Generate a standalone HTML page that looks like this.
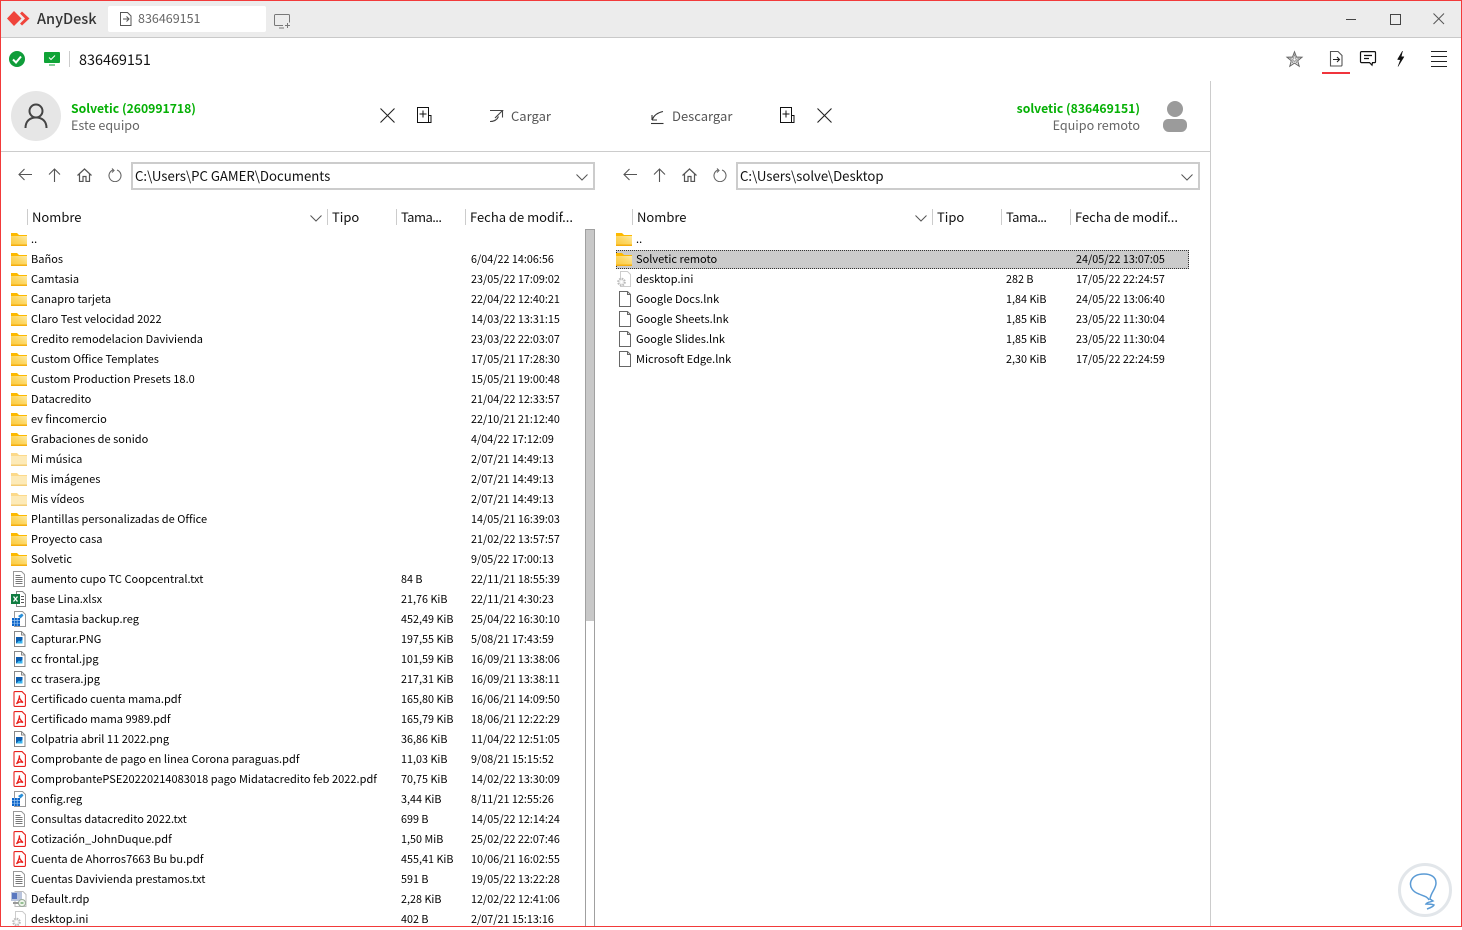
<!DOCTYPE html>
<html><head><meta charset="utf-8"><style>
html,body{margin:0;padding:0;background:#fff}
body{width:1462px;height:927px;overflow:hidden;position:relative;font-family:"Noto Sans CJK JP","Liberation Sans",sans-serif;color:#000}
div,span{position:absolute;white-space:nowrap}
svg{position:absolute;overflow:visible}
.r{left:0;width:600px;height:20px;font-size:11px;line-height:20px;letter-spacing:.03px}
.r span{top:0}
.r .s,.r .d{top:1px}
.n{left:31px}.s{left:401px;font-size:10.750px}.d{left:471px;font-size:10.750px}
.q{left:605px;width:600px}
.q .n{left:31px}.q .s{left:401px}.q .d{left:471px}
.r svg{left:10px;top:2px;width:18px;height:16px}
.h{font-size:13px;line-height:20px;top:207px;color:#111}
.sep{width:1px;height:16px;top:209px;background:#ccc}
.box{height:24px;top:162px;border:2px solid #ccc;background:#fff;font-size:13.200px;line-height:23px;color:#111}
</style></head><body>
<svg width="0" height="0" style="position:absolute"><defs>
<linearGradient id="fg" x1="0" y1="1" x2="1" y2="0"><stop offset="0" stop-color="#fbc93a"/><stop offset=".55" stop-color="#fcd868"/><stop offset="1" stop-color="#fdeaa8"/></linearGradient>
<symbol id="f" viewBox="0 0 18 16"><path d="M1 2h6l2 2h8v2H1z" fill="#fdb900"/><path d="M1 5h16v9.500H1z" fill="url(#fg)"/><path d="M1 13.500h16v1.500H1z" fill="#f5ae10"/></symbol>
<symbol id="l" viewBox="0 0 18 16"><path d="M1 2h6l2 2h8v2H1z" fill="#fcd98a"/><path d="M1 5h16v9.500H1z" fill="#fdeab8"/><path d="M1 13.500h16v1.500H1z" fill="#f4cd78"/></symbol>
<symbol id="t" viewBox="0 0 18 16"><path d="M3.500.5h8l3 3v12h-11z" fill="#fff" stroke="#999"/><path d="M5.500 4.500h5M5.500 6.500h7M5.500 8.500h7M5.500 10.500h7M5.500 12.500h7" stroke="#777"/></symbol>
<symbol id="x" viewBox="0 0 18 16"><path d="M6.500.5h6l3 3v12h-9z" fill="#fff" stroke="#888"/><path d="M11 5.500h3M11 8.500h3M11 11.500h3" stroke="#555"/><rect x="1" y="3" width="9" height="10" fill="#107c41"/><path d="M3.500 5.500l4 5M7.500 5.500l-4 5" stroke="#fff" stroke-width="1.300"/></symbol>
<symbol id="g" viewBox="0 0 18 16"><path d="M4.500.5h8l3 3v12h-11z" fill="#fff" stroke="#999"/><path d="M8 5l4-2.500 1.500 2-3 3z" fill="#2a8fd8"/><rect x="2" y="7" width="8" height="8" fill="#0a63c9"/><path d="M4.500 7v8M7.200 7v8M2 9.500h8M2 12.200h8" stroke="#9cc8f2" stroke-width=".7"/></symbol>
<symbol id="m" viewBox="0 0 18 16"><path d="M4.500.5h7l3.500 3.500v11.500H4.500z" fill="#fff" stroke="#888"/><path d="M11.500.5v3.500h3.500" fill="none" stroke="#888"/><rect x="6" y="6" width="6.500" height="6.500" fill="#0b5cad"/><path d="M6 12.500l3-3 1.500 1 2-2v4z" fill="#39b4ee"/></symbol>
<symbol id="p" viewBox="0 0 18 16"><path d="M5 .6h7l3.400 3.400v10.400a1 1 0 0 1-1 1H5a1 1 0 0 1-1-1V1.600a1 1 0 0 1 1-1z" fill="#fff" stroke="#e8201c" stroke-width="1.100"/><path d="M9.500 4.500c-.8 2 .2 4 3.500 7-2.500-1-5-.5-6.500 1.500 1.500-2.500 3-5 3-8.500z" fill="none" stroke="#e8201c" stroke-width="1.300"/></symbol>
<symbol id="d" viewBox="0 0 18 16"><path d="M5 .5h8l3 3v12H5z" fill="#fff" stroke="#bbb"/><rect x="1" y="1" width="11" height="9" fill="#b9c4dc"/><rect x="2" y="2" width="5" height="6" fill="#5a78c0"/><path d="M3 12h6" stroke="#999" stroke-width="2"/><circle cx="12" cy="12" r="3.500" fill="#eef4ea" stroke="#9a9"/><path d="M10.500 12h3" stroke="#3a8a3a"/></symbol>
<symbol id="o" viewBox="0 0 18 16"><path d="M5.500.5h7l3 3v12h-10z" fill="#fff" stroke="#ccc"/><circle cx="6.500" cy="11" r="3.300" fill="#eee" stroke="#bbb" stroke-width="2" stroke-dasharray="1.600 1"/><circle cx="6.500" cy="11" r="1.200" fill="#fff"/></symbol>
<symbol id="k" viewBox="0 0 18 16"><path d="M4.500.5h8l3 3v12h-11z" fill="#fff" stroke="#666"/><path d="M12.500.5v3h3" fill="none" stroke="#666"/></symbol>
<symbol id="nw" viewBox="0 0 15 16"><path d="M.5.500h11v15H.5z" fill="none" stroke="#111"/><path d="M11.500 8.500h2.500v7h-2.500z" fill="none" stroke="#111"/><path d="M2.500 7h7M6 3.500v7" fill="none" stroke="#111"/></symbol>
<symbol id="bk" viewBox="0 0 14 13"><path d="M14 6.500H1M6.500 1L1 6.500 6.500 12" fill="none" stroke="#555" stroke-width="1.100"/></symbol>
<symbol id="up" viewBox="0 0 13 14"><path d="M6.500 14V1M1 6.500L6.500 1 12 6.500" fill="none" stroke="#555" stroke-width="1.100"/></symbol>
<symbol id="hm" viewBox="0 0 15 14"><path d="M.5 7.500L7.500 1l7 6.500M2.500 6v7.500h3.500V8.500h3v5h3.500V6" fill="none" stroke="#555" stroke-width="1.200"/></symbol>
<symbol id="rf" viewBox="0 0 14 14"><path d="M9 2a6 6 0 1 1-4 0M4 .5L6 2.500 4 4.500" fill="none" stroke="#666" stroke-width="1.100"/></symbol>
</defs></svg>

<!-- title bar -->
<div style="left:0;top:0;width:1462px;height:37px;background:#ececec"></div>
<div style="left:0;top:37px;width:1462px;height:1px;background:#c9c9c9"></div>
<svg style="left:7px;top:10px" width="26" height="18"><path d="M7 1l7.500 7.500L7 16 0 8.500z" fill="#ef443b"/><path d="M15 1.500l7.500 7-7.500 7-2-2 5-5-5-5z" fill="#ef443b"/></svg>
<div style="left:37px;top:7px;font-size:14.500px;line-height:24px;color:#333;font-weight:500">AnyDesk</div>
<div style="left:108px;top:6px;width:158px;height:26px;background:#fff;border-radius:2px"></div>
<svg style="left:120px;top:12px" width="12" height="14" fill="none" stroke="#555"><path d="M.5.500h7l3.500 3.500v9.500H.5z"/><path d="M3 7h5.500M6.500 4.500L9 7l-2.500 2.500"/></svg>
<div style="left:138px;top:6px;font-size:12.500px;line-height:24px;color:#666">836469151</div>
<svg style="left:274px;top:14px" width="17" height="15" fill="none" stroke="#777"><path d="M9 11.500H1.500a1 1 0 0 1-1-1v-9a1 1 0 0 1 1-1h13a1 1 0 0 1 1 1v7"/><path d="M5 14h5M11 11.500h5M13.500 9v5"/></svg>
<div style="left:1346px;top:19px;width:10px;height:1px;background:#444"></div>
<div style="left:1390px;top:14px;width:9px;height:9px;border:1px solid #444"></div>
<svg style="left:1433px;top:13px" width="12" height="12" stroke="#555"><path d="M.5.500l10.500 10.500M11 .5L.5 11"/></svg>

<!-- toolbar -->
<svg style="left:9px;top:51px" width="16" height="16"><circle cx="8" cy="8" r="8" fill="#0f9d3a"/><path d="M4 8.500l3 3 5-6" fill="none" stroke="#fff" stroke-width="2"/></svg>
<svg style="left:44px;top:52px" width="16" height="14"><rect width="16" height="11" rx="1" fill="#0fa336"/><path d="M5 5.500l2 2 4-4" fill="none" stroke="#fff"/><path d="M5 13h6" stroke="#0fa336"/></svg>
<div style="left:69px;top:51px;width:1px;height:16px;background:#ccc"></div>
<div style="left:79px;top:49px;font-size:14.400px;line-height:22px;color:#111">836469151</div>
<svg style="left:1286px;top:51px" width="17" height="16" fill="none" stroke="#666"><path d="M8.500.8l2 5.200 5.500.2-4.300 3.500 1.500 5.500-4.700-3.100-4.700 3.100 1.500-5.500L1 6.200 6.500 6z"/><path d="M8.500 3.500L11 12 4 7h9L6 12z" stroke="#888" stroke-width=".6"/></svg>
<svg style="left:1329px;top:51px" width="14" height="16" fill="none" stroke="#555" stroke-width="1.100"><path d="M1.500.5h7.500l4 4v9.500a1 1 0 0 1-1 1h-10.500z"/><path d="M4 8.500h6M8 6l2.500 2.500L8 11" stroke="#222"/></svg>
<div style="left:1322px;top:72px;width:28px;height:2px;background:#f0343c"></div>
<svg style="left:1360px;top:51px" width="17" height="15" fill="none" stroke="#111" stroke-width="1.200"><path d="M1.500.6h13a1 1 0 0 1 1 1v9a1 1 0 0 1-1 1h-2l-.500 2.500-2.500-2.500h-8a1 1 0 0 1-1-1v-9a1 1 0 0 1 1-1z"/><path d="M4 4.500h8M4 7.500h5"/></svg>
<svg style="left:1396px;top:50px" width="9" height="17"><path d="M6.500 1L1.500 9.500l3 .2L2 16.500 8 6.800l-2.800-.1z" fill="#111" stroke="#111" stroke-width=".5"/></svg>
<div style="left:1431px;top:51px;width:16px;height:1px;background:#222"></div>
<div style="left:1431px;top:56px;width:16px;height:1px;background:#222"></div>
<div style="left:1431px;top:61px;width:16px;height:1px;background:#222"></div>
<div style="left:1431px;top:66px;width:16px;height:1px;background:#222"></div>

<div style="left:1210px;top:81px;width:1px;height:846px;background:#ccc"></div>

<!-- peers -->
<div style="left:11px;top:91px;width:50px;height:50px;border-radius:25px;background:#e6e6e6"></div>
<svg style="left:24px;top:103px" width="24" height="26" fill="none" stroke="#444" stroke-width="2"><circle cx="12" cy="8" r="6.500"/><path d="M1.500 25c0-7 4.500-10.500 10.500-10.500S22.500 18 22.500 25"/></svg>
<div style="left:71px;top:98px;font-size:12.200px;line-height:20px;font-weight:700;color:#05b005">Solvetic (260991718)</div>
<div style="left:71px;top:115px;font-size:12.600px;line-height:20px;color:#666">Este equipo</div>
<svg style="left:380px;top:108px" width="15" height="15" stroke="#222" stroke-width="1.100"><path d="M.5.500l14 14M14.500.5l-14 14"/></svg>
<svg style="left:417px;top:107px" width="15" height="16"><use href="#nw"/></svg>
<svg style="left:490px;top:110px" width="13" height="12" fill="none" stroke="#444" stroke-width="1.100"><path d="M0 .5h12.500L5 8M12.500 .5V7.500M0 11.500c4 0 7-1.500 8.500-5"/></svg>
<div style="left:511px;top:106px;font-size:13px;line-height:20px;color:#555">Cargar</div>
<svg style="left:651px;top:111px" width="13" height="13" fill="none" stroke="#333" stroke-width="1.100"><path d="M1 9V4M1 9h5M1 9c2-5 6-7.500 11-8.500"/><path d="M0 12.500h12.500"/></svg>
<div style="left:672px;top:106px;font-size:13px;line-height:20px;color:#555">Descargar</div>
<svg style="left:780px;top:107px" width="15" height="16"><use href="#nw"/></svg>
<svg style="left:817px;top:108px" width="15" height="15" stroke="#222" stroke-width="1.100"><path d="M.5.500l14 14M14.500.5l-14 14"/></svg>
<div style="right:322px;top:98px;font-size:12.200px;line-height:20px;font-weight:700;color:#05b005">solvetic (836469151)</div>
<div style="right:322px;top:115px;font-size:12.600px;line-height:20px;color:#666">Equipo remoto</div>
<svg style="left:1163px;top:101px" width="24" height="31" fill="#9b9b9b"><circle cx="12" cy="8" r="8"/><path d="M5 18h14a5 5 0 0 1 5 5v2a6 6 0 0 1-6 6H6a6 6 0 0 1-6-6v-2a5 5 0 0 1 5-5z"/></svg>
<div style="left:0;top:151px;width:1210px;height:1px;background:#ccc"></div>

<!-- left nav -->
<svg style="left:18px;top:168px" width="14" height="13"><use href="#bk"/></svg>
<svg style="left:48px;top:168px" width="13" height="14"><use href="#up"/></svg>
<svg style="left:77px;top:168px" width="15" height="14"><use href="#hm"/></svg>
<svg style="left:108px;top:168px" width="14" height="14"><use href="#rf"/></svg>
<div class="box" style="left:131px;width:458px;padding-left:2px">C:\Users\PC GAMER\Documents</div>
<svg style="left:576px;top:174px" width="12" height="7" fill="none" stroke="#555"><path d="M.5.500L6 6l5.500-5.500"/></svg>
<!-- right nav -->
<svg style="left:623px;top:168px" width="14" height="13"><use href="#bk"/></svg>
<svg style="left:653px;top:168px" width="13" height="14"><use href="#up"/></svg>
<svg style="left:682px;top:168px" width="15" height="14"><use href="#hm"/></svg>
<svg style="left:713px;top:168px" width="14" height="14"><use href="#rf"/></svg>
<div class="box" style="left:736px;width:458px;padding-left:2px">C:\Users\solve\Desktop</div>
<svg style="left:1181px;top:174px" width="12" height="7" fill="none" stroke="#555"><path d="M.5.500L6 6l5.500-5.500"/></svg>

<!-- headers left -->
<div class="sep" style="left:27px"></div><div class="h" style="left:32px">Nombre</div>
<svg style="left:310px;top:215px" width="12" height="7" fill="none" stroke="#555"><path d="M.5.500L6 6l5.500-5.500"/></svg>
<div class="sep" style="left:327px"></div><div class="h" style="left:332px">Tipo</div>
<div class="sep" style="left:396px"></div><div class="h" style="left:401px;letter-spacing:-.55px">Tama...</div>
<div class="sep" style="left:465px"></div><div class="h" style="left:470px">Fecha de modif...</div>
<!-- headers right -->
<div class="sep" style="left:632px"></div><div class="h" style="left:637px">Nombre</div>
<svg style="left:915px;top:215px" width="12" height="7" fill="none" stroke="#555"><path d="M.5.500L6 6l5.500-5.500"/></svg>
<div class="sep" style="left:932px"></div><div class="h" style="left:937px">Tipo</div>
<div class="sep" style="left:1001px"></div><div class="h" style="left:1006px;letter-spacing:-.55px">Tama...</div>
<div class="sep" style="left:1070px"></div><div class="h" style="left:1075px">Fecha de modif...</div>

<!-- scrollbar -->
<div style="left:585px;top:229px;width:1px;height:698px;background:#a0a0a0"></div>
<div style="left:594px;top:229px;width:1px;height:698px;background:#a0a0a0"></div>
<div style="left:585px;top:229px;width:10px;height:1px;background:#a0a0a0"></div>
<div style="left:586px;top:230px;width:8px;height:391px;background:#c8c8c8"></div>

<!-- left rows -->
<div class="r" style="top:229px"><svg><use href="#f"/></svg><span class="n">..</span></div>
<div class="r" style="top:249px"><svg><use href="#f"/></svg><span class="n">Baños</span><span class="d">6/04/22 14:06:56</span></div>
<div class="r" style="top:269px"><svg><use href="#f"/></svg><span class="n">Camtasia</span><span class="d">23/05/22 17:09:02</span></div>
<div class="r" style="top:289px"><svg><use href="#f"/></svg><span class="n">Canapro tarjeta</span><span class="d">22/04/22 12:40:21</span></div>
<div class="r" style="top:309px"><svg><use href="#f"/></svg><span class="n">Claro Test velocidad 2022</span><span class="d">14/03/22 13:31:15</span></div>
<div class="r" style="top:329px"><svg><use href="#f"/></svg><span class="n">Credito remodelacion Davivienda</span><span class="d">23/03/22 22:03:07</span></div>
<div class="r" style="top:349px"><svg><use href="#f"/></svg><span class="n">Custom Office Templates</span><span class="d">17/05/21 17:28:30</span></div>
<div class="r" style="top:369px"><svg><use href="#f"/></svg><span class="n">Custom Production Presets 18.0</span><span class="d">15/05/21 19:00:48</span></div>
<div class="r" style="top:389px"><svg><use href="#f"/></svg><span class="n">Datacredito</span><span class="d">21/04/22 12:33:57</span></div>
<div class="r" style="top:409px"><svg><use href="#f"/></svg><span class="n">ev fincomercio</span><span class="d">22/10/21 21:12:40</span></div>
<div class="r" style="top:429px"><svg><use href="#f"/></svg><span class="n">Grabaciones de sonido</span><span class="d">4/04/22 17:12:09</span></div>
<div class="r" style="top:449px"><svg><use href="#l"/></svg><span class="n">Mi música</span><span class="d">2/07/21 14:49:13</span></div>
<div class="r" style="top:469px"><svg><use href="#l"/></svg><span class="n">Mis imágenes</span><span class="d">2/07/21 14:49:13</span></div>
<div class="r" style="top:489px"><svg><use href="#l"/></svg><span class="n">Mis vídeos</span><span class="d">2/07/21 14:49:13</span></div>
<div class="r" style="top:509px"><svg><use href="#f"/></svg><span class="n">Plantillas personalizadas de Office</span><span class="d">14/05/21 16:39:03</span></div>
<div class="r" style="top:529px"><svg><use href="#f"/></svg><span class="n">Proyecto casa</span><span class="d">21/02/22 13:57:57</span></div>
<div class="r" style="top:549px"><svg><use href="#f"/></svg><span class="n">Solvetic</span><span class="d">9/05/22 17:00:13</span></div>
<div class="r" style="top:569px"><svg><use href="#t"/></svg><span class="n">aumento cupo TC Coopcentral.txt</span><span class="s">84 B</span><span class="d">22/11/21 18:55:39</span></div>
<div class="r" style="top:589px"><svg><use href="#x"/></svg><span class="n">base Lina.xlsx</span><span class="s">21,76 KiB</span><span class="d">22/11/21 4:30:23</span></div>
<div class="r" style="top:609px"><svg><use href="#g"/></svg><span class="n">Camtasia backup.reg</span><span class="s">452,49 KiB</span><span class="d">25/04/22 16:30:10</span></div>
<div class="r" style="top:629px"><svg><use href="#m"/></svg><span class="n">Capturar.PNG</span><span class="s">197,55 KiB</span><span class="d">5/08/21 17:43:59</span></div>
<div class="r" style="top:649px"><svg><use href="#m"/></svg><span class="n">cc frontal.jpg</span><span class="s">101,59 KiB</span><span class="d">16/09/21 13:38:06</span></div>
<div class="r" style="top:669px"><svg><use href="#m"/></svg><span class="n">cc trasera.jpg</span><span class="s">217,31 KiB</span><span class="d">16/09/21 13:38:11</span></div>
<div class="r" style="top:689px"><svg><use href="#p"/></svg><span class="n">Certificado cuenta mama.pdf</span><span class="s">165,80 KiB</span><span class="d">16/06/21 14:09:50</span></div>
<div class="r" style="top:709px"><svg><use href="#p"/></svg><span class="n">Certificado mama 9989.pdf</span><span class="s">165,79 KiB</span><span class="d">18/06/21 12:22:29</span></div>
<div class="r" style="top:729px"><svg><use href="#m"/></svg><span class="n">Colpatria abril 11 2022.png</span><span class="s">36,86 KiB</span><span class="d">11/04/22 12:51:05</span></div>
<div class="r" style="top:749px"><svg><use href="#p"/></svg><span class="n">Comprobante de pago en linea Corona paraguas.pdf</span><span class="s">11,03 KiB</span><span class="d">9/08/21 15:15:52</span></div>
<div class="r" style="top:769px"><svg><use href="#p"/></svg><span class="n">ComprobantePSE20220214083018 pago Midatacredito feb 2022.pdf</span><span class="s">70,75 KiB</span><span class="d">14/02/22 13:30:09</span></div>
<div class="r" style="top:789px"><svg><use href="#g"/></svg><span class="n">config.reg</span><span class="s">3,44 KiB</span><span class="d">8/11/21 12:55:26</span></div>
<div class="r" style="top:809px"><svg><use href="#t"/></svg><span class="n">Consultas datacredito 2022.txt</span><span class="s">699 B</span><span class="d">14/05/22 12:14:24</span></div>
<div class="r" style="top:829px"><svg><use href="#p"/></svg><span class="n">Cotización_JohnDuque.pdf</span><span class="s">1,50 MiB</span><span class="d">25/02/22 22:07:46</span></div>
<div class="r" style="top:849px"><svg><use href="#p"/></svg><span class="n">Cuenta de Ahorros7663 Bu bu.pdf</span><span class="s">455,41 KiB</span><span class="d">10/06/21 16:02:55</span></div>
<div class="r" style="top:869px"><svg><use href="#t"/></svg><span class="n">Cuentas Davivienda prestamos.txt</span><span class="s">591 B</span><span class="d">19/05/22 13:22:28</span></div>
<div class="r" style="top:889px"><svg><use href="#d"/></svg><span class="n">Default.rdp</span><span class="s">2,28 KiB</span><span class="d">12/02/22 12:41:06</span></div>
<div class="r" style="top:909px"><svg><use href="#o"/></svg><span class="n">desktop.ini</span><span class="s">402 B</span><span class="d">2/07/21 15:13:16</span></div>

<!-- right rows -->
<div style="left:616px;top:250px;width:571px;height:17px;background:#cbcbcb;border:1px dotted #333"></div>
<div class="r q" style="top:229px"><svg><use href="#f"/></svg><span class="n">..</span></div>
<div class="r q" style="top:249px"><svg><use href="#f"/></svg><span class="n">Solvetic remoto</span><span class="d">24/05/22 13:07:05</span></div>
<div class="r q" style="top:269px"><svg><use href="#o"/></svg><span class="n">desktop.ini</span><span class="s">282 B</span><span class="d">17/05/22 22:24:57</span></div>
<div class="r q" style="top:289px"><svg><use href="#k"/></svg><span class="n">Google Docs.lnk</span><span class="s">1,84 KiB</span><span class="d">24/05/22 13:06:40</span></div>
<div class="r q" style="top:309px"><svg><use href="#k"/></svg><span class="n">Google Sheets.lnk</span><span class="s">1,85 KiB</span><span class="d">23/05/22 11:30:04</span></div>
<div class="r q" style="top:329px"><svg><use href="#k"/></svg><span class="n">Google Slides.lnk</span><span class="s">1,85 KiB</span><span class="d">23/05/22 11:30:04</span></div>
<div class="r q" style="top:349px"><svg><use href="#k"/></svg><span class="n">Microsoft Edge.lnk</span><span class="s">2,30 KiB</span><span class="d">17/05/22 22:24:59</span></div>

<!-- watermark -->
<svg style="left:1398px;top:862px" width="54" height="56" fill="none"><circle cx="27" cy="28" r="25.500" fill="#fff" stroke="#e2e6ea" stroke-width="3"/><path d="M31 38c-2-4-6-4-10-6-6-2-10-7-8-13 2-5 7-7 13-7 7 0 12 3 12 9 0 6-5 9-6 16l3 2c-2 1-6 1-7 3 3 0 6 0 8 1-1 2-4 3-7 4" stroke="#5b9bd5" stroke-width="1.500"/></svg>

<!-- window border -->
<div style="left:0;top:0;width:1462px;height:1px;background:#f23a3a"></div>
<div style="left:0;top:926px;width:1462px;height:1px;background:#f23a3a"></div>
<div style="left:0;top:0;width:1px;height:927px;background:#f23a3a"></div>
<div style="left:1461px;top:0;width:1px;height:927px;background:#f23a3a"></div>
</body></html>
